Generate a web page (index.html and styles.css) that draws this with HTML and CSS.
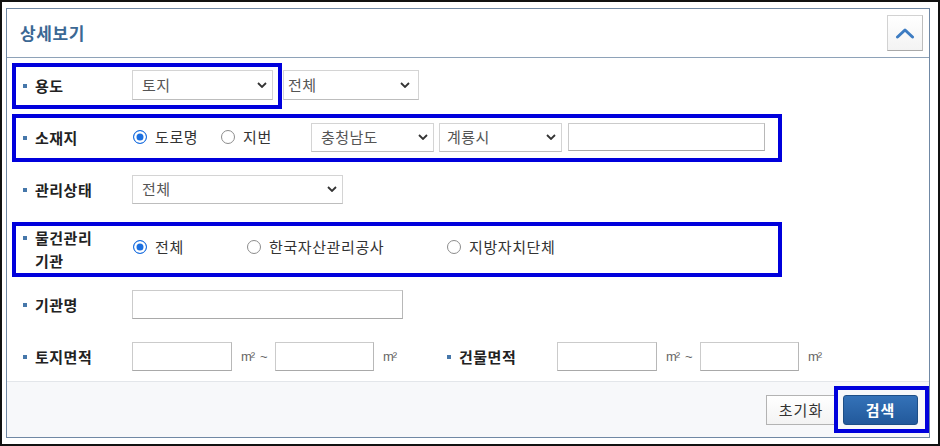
FILE: index.html
```html
<!DOCTYPE html>
<html lang="ko">
<head>
<meta charset="utf-8">
<title>상세보기</title>
<link rel="stylesheet" href="styles.css">
</head>
<body>
<div class="frame">
  <section class="panel">
    <header class="panel-head">
      <h2 class="title">상세보기</h2>
      <button class="toggle" type="button" aria-label="접기">
        <svg width="20" height="12" viewBox="0 0 20 12"><path d="M2.5 10 L10 3 L17.5 10" fill="none" stroke="#3d7cc2" stroke-width="3" stroke-linecap="round" stroke-linejoin="round"/></svg>
      </button>
    </header>

    <div class="panel-body">
      <div class="row">
        <div class="label"><span class="bullet"></span><span>용도</span></div>
        <div class="select sel-use"><span>토지</span><svg class="caret" width="10" height="6" viewBox="0 0 10 6"><path d="M1 1 L5 5 L9 1" fill="none" stroke="#333" stroke-width="1.8"/></svg></div>
        <div class="select sel-use-sub"><span>전체</span><svg class="caret" width="10" height="6" viewBox="0 0 10 6"><path d="M1 1 L5 5 L9 1" fill="none" stroke="#333" stroke-width="1.8"/></svg></div>
      </div>

      <div class="row">
        <div class="label"><span class="bullet"></span><span>소재지</span></div>
        <div class="radio-group">
          <label class="opt opt-road"><span class="dot on"></span>도로명</label>
          <label class="opt opt-lot"><span class="dot"></span>지번</label>
        </div>
        <div class="select sel-sido"><span>충청남도</span><svg class="caret" width="10" height="6" viewBox="0 0 10 6"><path d="M1 1 L5 5 L9 1" fill="none" stroke="#333" stroke-width="1.8"/></svg></div>
        <div class="select sel-sigungu"><span>계룡시</span><svg class="caret" width="10" height="6" viewBox="0 0 10 6"><path d="M1 1 L5 5 L9 1" fill="none" stroke="#333" stroke-width="1.8"/></svg></div>
        <input class="field field-addr" type="text">
      </div>

      <div class="row">
        <div class="label"><span class="bullet"></span><span>관리상태</span></div>
        <div class="select sel-status"><span>전체</span><svg class="caret" width="10" height="6" viewBox="0 0 10 6"><path d="M1 1 L5 5 L9 1" fill="none" stroke="#333" stroke-width="1.8"/></svg></div>
      </div>

      <div class="row row-tall">
        <div class="label"><span class="bullet"></span><span>물건관리<br>기관</span></div>
        <div class="radio-group">
          <label class="opt opt-all"><span class="dot on"></span>전체</label>
          <label class="opt opt-kamco"><span class="dot"></span>한국자산관리공사</label>
          <label class="opt"><span class="dot"></span>지방자치단체</label>
        </div>
      </div>

      <div class="row">
        <div class="label"><span class="bullet"></span><span>기관명</span></div>
        <input class="field field-org" type="text">
      </div>

      <div class="row">
        <div class="label"><span class="bullet"></span><span>토지면적</span></div>
        <div class="range range-first">
          <input class="field field-area" type="text">
          <span class="unit">m²</span>
          <span class="tilde">~</span>
          <input class="field field-area2" type="text">
          <span class="unit">m²</span>
        </div>
        <div class="label label-wide"><span class="bullet"></span><span>건물면적</span></div>
        <div class="range">
          <input class="field field-area" type="text">
          <span class="unit">m²</span>
          <span class="tilde">~</span>
          <input class="field field-area2" type="text">
          <span class="unit">m²</span>
        </div>
      </div>
    </div>

    <footer class="panel-foot">
      <button class="btn btn-reset" type="button">초기화</button>
      <button class="btn btn-search" type="button">검색</button>
    </footer>
  </section>

  <div class="mark mark-use"></div>
  <div class="mark mark-loc"></div>
  <div class="mark mark-org"></div>
  <div class="mark mark-search"></div>
</div>
</body>
</html>
```

FILE: styles.css
```css
html, body {
  margin: 0;
  background: #fff;
}
body {
  font-family: "Noto Sans CJK KR", "Noto Sans", sans-serif;
}
.frame {
  position: relative;
  width: 940px;
  height: 446px;
  box-sizing: border-box;
  border: 2px solid #111;
  padding: 6px 8px 6px 4px;
  display: flex;
}
.panel {
  flex: 1;
  border: 1px solid #7088a4;
  display: flex;
  flex-direction: column;
  background: #fff;
}
.panel-head {
  height: 48px;
  flex: none;
  border-bottom: 1px solid #8ea2b8;
  display: flex;
  align-items: center;
  justify-content: space-between;
  padding: 0 6px 0 13px;
}
.title {
  margin: 0;
  font-size: 17px;
  font-weight: 700;
  line-height: 22px;
  color: #3b6894;
  letter-spacing: 0.6px;
}
.toggle {
  width: 36px;
  height: 36px;
  padding: 0;
  box-sizing: border-box;
  border: 1px solid #d2d2d2;
  border-right-color: #bdbdbd;
  border-bottom-color: #a9a9a9;
  background: linear-gradient(#ffffff, #f3f3f3);
  display: flex;
  align-items: center;
  justify-content: center;
}
.panel-body {
  flex: none;
  display: flex;
  flex-direction: column;
  gap: 22px;
  padding: 12px 0 10px 16px;
}
.row {
  display: flex;
  align-items: center;
  height: 30px;
}
.row-tall {
  height: 41px;
}
.label {
  width: 109px;
  flex: none;
  display: flex;
  align-items: flex-start;
  font-size: 15px;
  font-weight: 700;
  line-height: 23px;
  color: #222;
  letter-spacing: 0.5px;
}
.label-wide {
  width: 110px;
}
.row-tall .label {
  align-self: flex-start;
}
.bullet {
  flex: none;
  width: 4px;
  height: 4px;
  margin: 10px 8px 0 0;
  background: #4677aa;
}

/* select look-alikes */
.select {
  flex: none;
  height: 30px;
  box-sizing: border-box;
  border: 1px solid #d4d4d4;
  border-bottom-color: #bdbdbd;
  background: #fff;
  display: flex;
  align-items: center;
  justify-content: space-between;
  padding: 0 5px 0 9px;
  font-size: 15px;
  line-height: 20px;
  color: #555;
  letter-spacing: 0.4px;
}
.caret {
  flex: none;
}
.sel-use {
  width: 141px;
}
.sel-use-sub {
  width: 136px;
  margin-left: 10px;
  padding-left: 4px;
  padding-right: 8px;
}
.sel-sido {
  width: 123px;
  height: 29px;
}
.sel-sigungu {
  width: 123px;
  height: 29px;
  margin-left: 5px;
  padding-left: 7px;
}
.sel-status {
  width: 211px;
  height: 29px;
}

/* inputs */
.field {
  flex: none;
  height: 29px;
  box-sizing: border-box;
  margin: 0;
  padding: 0 6px;
  border: 1px solid #cbcbcb;
  border-right-color: #b8b8b8;
  border-bottom-color: #a9a9a9;
  background: #fff;
  font-family: inherit;
  font-size: 13px;
  outline: none;
}
.field-addr {
  width: 197px;
  height: 28px;
  margin-left: 6px;
}
.field-org {
  width: 271px;
}
.field-area {
  width: 100px;
}
.field-area2 {
  width: 99px;
  margin-left: 7px;
}

/* radios */
.radio-group {
  display: flex;
  align-items: center;
  padding-left: 1px;
}
.opt {
  display: flex;
  align-items: center;
  gap: 8px;
  font-size: 15px;
  line-height: 20px;
  color: #333;
  letter-spacing: 0.6px;
}
.opt-road {
  width: 88px;
}
.opt-lot {
  width: 90px;
}
.opt-all {
  width: 114px;
}
.opt-kamco {
  width: 200px;
}
.dot {
  flex: none;
  width: 14px;
  height: 14px;
  box-sizing: border-box;
  border-radius: 50%;
  border: 1px solid #8c8c8c;
  background: #fff;
}
.dot.on {
  border: 1.5px solid #1b6fe0;
  background: #1b6fe0;
  box-shadow: inset 0 0 0 2.5px #fff;
}

/* area range */
.range {
  display: flex;
  align-items: center;
}
.range-first {
  width: 315px;
  flex: none;
}
.unit {
  display: inline-block;
  width: 12px;
  margin-left: 9px;
  font-family: "Liberation Sans", sans-serif;
  font-size: 13px;
  color: #666;
  letter-spacing: -1px;
}
.tilde {
  display: inline-block;
  width: 8px;
  margin-left: 7px;
  font-family: "Liberation Sans", sans-serif;
  font-size: 13px;
  color: #666;
}

/* footer */
.panel-foot {
  flex: 1;
  border-top: 1px solid #e3e6ea;
  background: #f7f8fa;
  display: flex;
  align-items: center;
  justify-content: flex-end;
  gap: 7px;
  padding-right: 11px;
}
.btn {
  height: 30px;
  box-sizing: border-box;
  padding: 0;
  font-family: inherit;
  font-size: 15px;
  line-height: 28px;
  letter-spacing: 1px;
}
.btn-reset {
  width: 70px;
  border: 1px solid #b3b3b3;
  background: linear-gradient(#ffffff, #f3f3f3);
  color: #333;
}
.btn-search {
  width: 75px;
  border: 1px solid #1d4e86;
  border-radius: 3px;
  background: linear-gradient(#3472b8, #22599b);
  color: #fff;
  font-weight: 700;
}

/* annotation boxes drawn over the form */
.mark {
  position: absolute;
  box-sizing: border-box;
  border: 4px solid #0000dc;
  pointer-events: none;
}
.mark-use {
  left: 10px;
  top: 61px;
  width: 270px;
  height: 46px;
}
.mark-loc {
  left: 10px;
  top: 112px;
  width: 770px;
  height: 48px;
}
.mark-org {
  left: 10px;
  top: 220px;
  width: 770px;
  height: 55px;
}
.mark-search {
  left: 832px;
  top: 384px;
  width: 95px;
  height: 47px;
}
```
